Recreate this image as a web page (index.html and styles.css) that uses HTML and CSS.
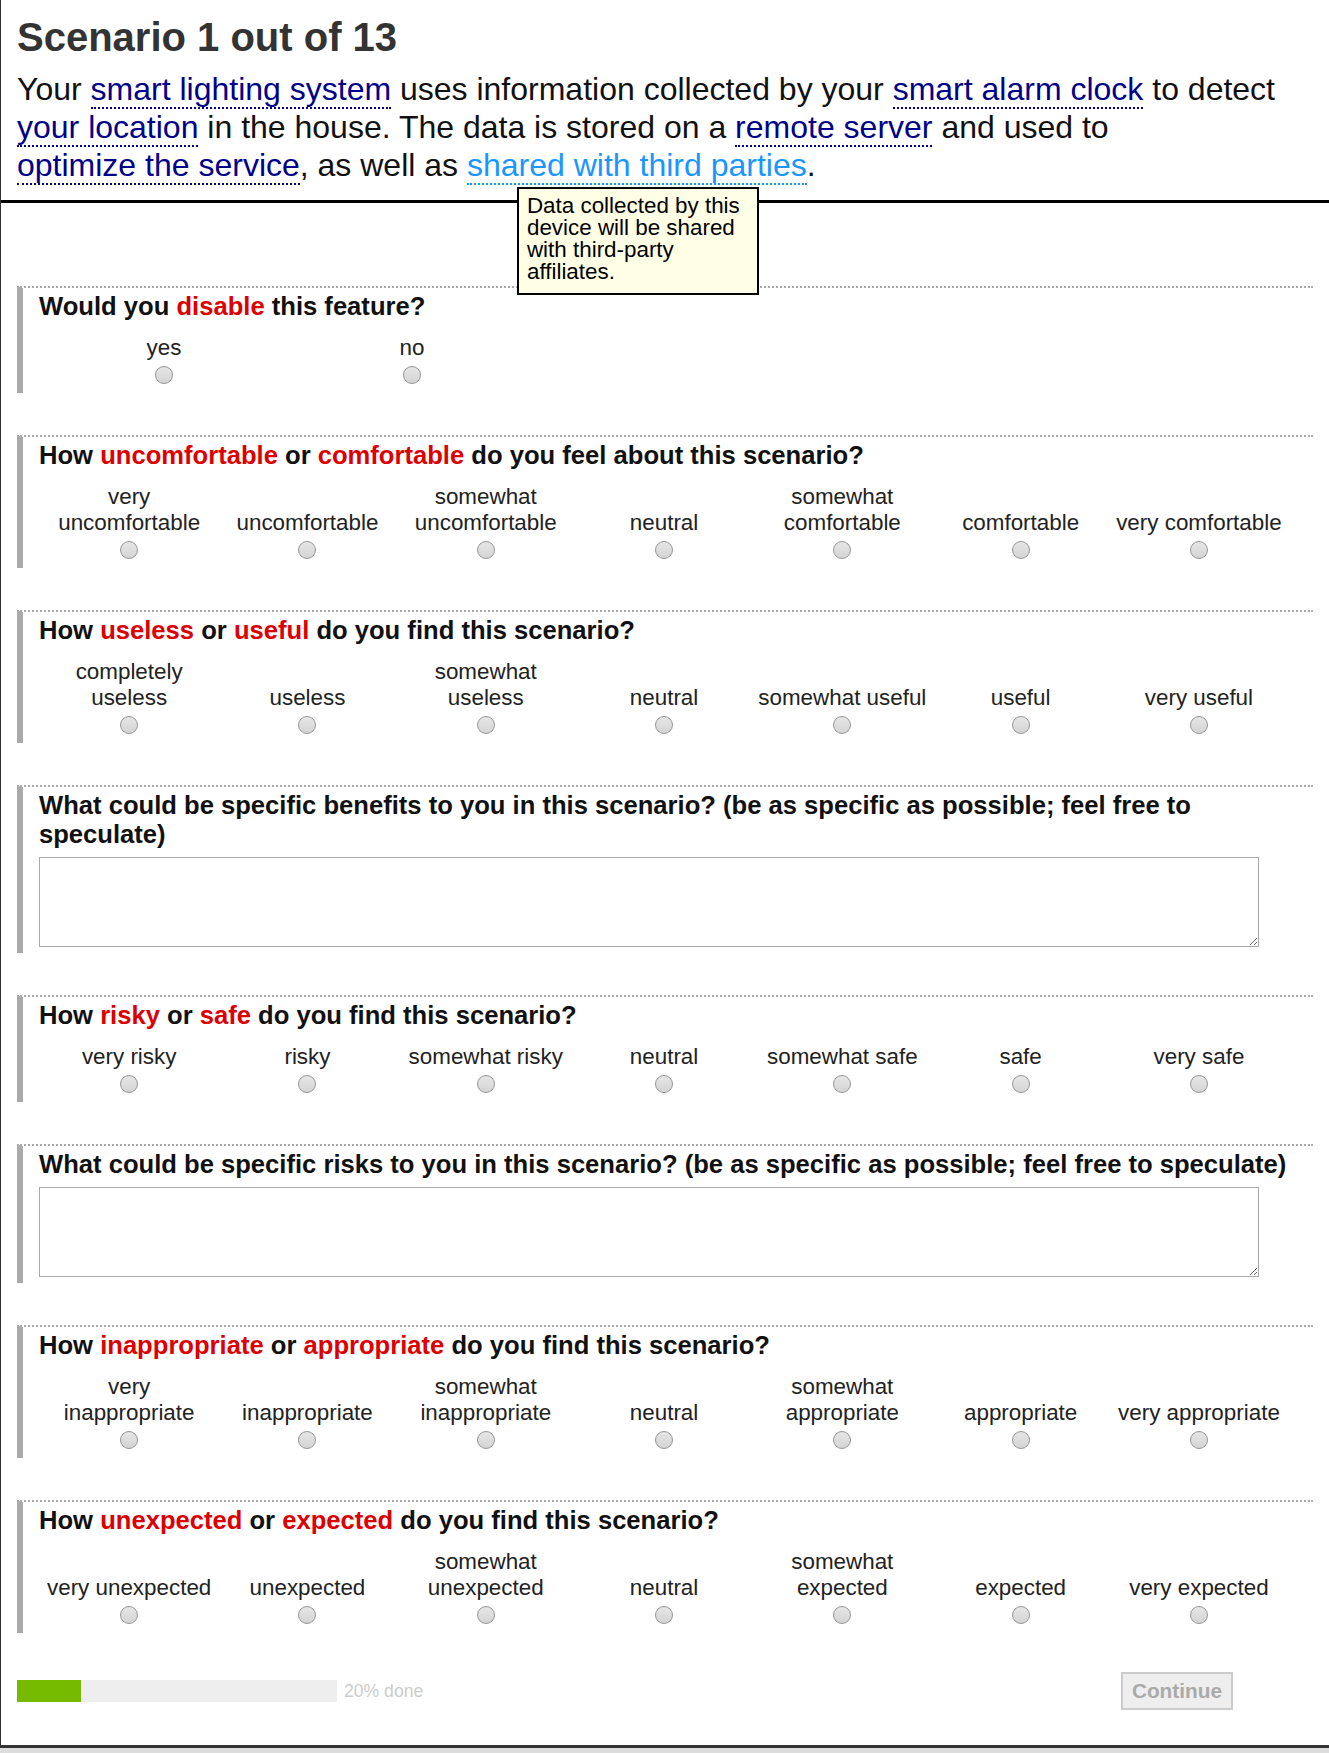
FILE: index.html
```html
<!DOCTYPE html>
<html lang="en">
<head>
<meta charset="utf-8">
<title>Scenario 1 out of 13</title>
<link rel="stylesheet" href="styles.css">
</head>
<body>
<div class="page">
  <header class="scenario">
    <h1 class="scenario-title">Scenario 1 out of 13</h1>
    <p class="scenario-text">Your <span class="term">smart lighting system</span> uses information collected by your <span class="term">smart alarm clock</span> to detect <span class="term">your location</span> in the house. The data is stored on a <span class="term">remote server</span> and used to <span class="term">optimize the service</span>, as well as <span class="term term-active">shared with third parties<span class="tooltip">Data collected by this device will be shared with third-party affiliates.</span></span>.</p>
  </header>

  <main class="survey">
    <section class="question">
      <h2 class="q-title">Would you <span class="hl">disable</span> this feature?</h2>
      <div class="options options-2">
        <label class="option"><span>yes</span><input type="radio" name="q1"></label>
        <label class="option"><span>no</span><input type="radio" name="q1"></label>
      </div>
    </section>

    <section class="question">
      <h2 class="q-title">How <span class="hl">uncomfortable</span> or <span class="hl">comfortable</span> do you feel about this scenario?</h2>
      <div class="options">
        <label class="option"><span>very uncomfortable</span><input type="radio" name="q2"></label>
        <label class="option"><span>uncomfortable</span><input type="radio" name="q2"></label>
        <label class="option"><span>somewhat uncomfortable</span><input type="radio" name="q2"></label>
        <label class="option"><span>neutral</span><input type="radio" name="q2"></label>
        <label class="option"><span>somewhat comfortable</span><input type="radio" name="q2"></label>
        <label class="option"><span>comfortable</span><input type="radio" name="q2"></label>
        <label class="option"><span>very comfortable</span><input type="radio" name="q2"></label>
      </div>
    </section>

    <section class="question">
      <h2 class="q-title">How <span class="hl">useless</span> or <span class="hl">useful</span> do you find this scenario?</h2>
      <div class="options">
        <label class="option"><span>completely useless</span><input type="radio" name="q3"></label>
        <label class="option"><span>useless</span><input type="radio" name="q3"></label>
        <label class="option"><span>somewhat useless</span><input type="radio" name="q3"></label>
        <label class="option"><span>neutral</span><input type="radio" name="q3"></label>
        <label class="option"><span>somewhat useful</span><input type="radio" name="q3"></label>
        <label class="option"><span>useful</span><input type="radio" name="q3"></label>
        <label class="option"><span>very useful</span><input type="radio" name="q3"></label>
      </div>
    </section>

    <section class="question question-text">
      <h2 class="q-title">What could be specific benefits to you in this scenario? (be as specific as possible; feel free to speculate)</h2>
      <textarea class="answer" aria-label="benefits"></textarea>
    </section>

    <section class="question">
      <h2 class="q-title">How <span class="hl">risky</span> or <span class="hl">safe</span> do you find this scenario?</h2>
      <div class="options">
        <label class="option"><span>very risky</span><input type="radio" name="q5"></label>
        <label class="option"><span>risky</span><input type="radio" name="q5"></label>
        <label class="option"><span>somewhat risky</span><input type="radio" name="q5"></label>
        <label class="option"><span>neutral</span><input type="radio" name="q5"></label>
        <label class="option"><span>somewhat safe</span><input type="radio" name="q5"></label>
        <label class="option"><span>safe</span><input type="radio" name="q5"></label>
        <label class="option"><span>very safe</span><input type="radio" name="q5"></label>
      </div>
    </section>

    <section class="question question-text">
      <h2 class="q-title">What could be specific risks to you in this scenario? (be as specific as possible; feel free to speculate)</h2>
      <textarea class="answer" aria-label="risks"></textarea>
    </section>

    <section class="question">
      <h2 class="q-title">How <span class="hl">inappropriate</span> or <span class="hl">appropriate</span> do you find this scenario?</h2>
      <div class="options">
        <label class="option"><span>very inappropriate</span><input type="radio" name="q7"></label>
        <label class="option"><span>inappropriate</span><input type="radio" name="q7"></label>
        <label class="option"><span>somewhat inappropriate</span><input type="radio" name="q7"></label>
        <label class="option"><span>neutral</span><input type="radio" name="q7"></label>
        <label class="option"><span>somewhat appropriate</span><input type="radio" name="q7"></label>
        <label class="option"><span>appropriate</span><input type="radio" name="q7"></label>
        <label class="option"><span>very appropriate</span><input type="radio" name="q7"></label>
      </div>
    </section>

    <section class="question">
      <h2 class="q-title">How <span class="hl">unexpected</span> or <span class="hl">expected</span> do you find this scenario?</h2>
      <div class="options">
        <label class="option"><span>very unexpected</span><input type="radio" name="q8"></label>
        <label class="option"><span>unexpected</span><input type="radio" name="q8"></label>
        <label class="option"><span>somewhat unexpected</span><input type="radio" name="q8"></label>
        <label class="option"><span>neutral</span><input type="radio" name="q8"></label>
        <label class="option"><span>somewhat expected</span><input type="radio" name="q8"></label>
        <label class="option"><span>expected</span><input type="radio" name="q8"></label>
        <label class="option"><span>very expected</span><input type="radio" name="q8"></label>
      </div>
    </section>
  </main>

  <footer class="survey-footer">
    <div class="progress">
      <div class="progress-track"><div class="progress-fill" style="width: 20%"></div></div>
      <span class="progress-label">20% done</span>
    </div>
    <button class="continue" type="button" disabled>Continue</button>
  </footer>
</div>
</body>
</html>
```

FILE: styles.css
```css
html {
  background: #dddddd;
}

body {
  margin: 0;
  font-family: "Liberation Sans", Arial, sans-serif;
  color: #111;
}

.page {
  background: #fff;
  border-left: 1px solid #333;
  border-bottom: 3px solid #333;
}

/* Header */
.scenario {
  padding: 15px 16px 16px 16px;
  border-bottom: 3px solid #000;
}

.scenario-title {
  margin: 0;
  font-size: 40px;
  font-weight: bold;
  line-height: normal;
  color: #333;
}

.scenario-text {
  margin: 10px 0 0;
  font-size: 32px;
  line-height: 38px;
  color: #111;
}

.term {
  color: #00008b;
  border-bottom: 2px dotted #00008b;
  white-space: nowrap;
}

.term-active {
  position: relative;
  color: #1a96ff;
  border-bottom-color: #1a96ff;
}

.tooltip {
  position: absolute;
  z-index: 2;
  left: 50px;
  top: calc(100% + 4px);
  width: 222px;
  padding: 6px 8px 10px 8px;
  border: 2px solid #000;
  background: #ffffe6;
  color: #000;
  font-size: 22.4px;
  line-height: 22px;
  white-space: normal;
}

/* Survey */
.survey {
  display: flex;
  flex-direction: column;
  gap: 42px;
  padding: 83px 16px 0 16px;
}

.question {
  border-top: 2px dotted #aaa;
  border-left: 6px solid #aaa;
  padding: 4px 0 9px 16px;
}

.question-text {
  padding-bottom: 6px;
}

.q-title {
  margin: 0;
  font-size: 25.6px;
  font-weight: bold;
  line-height: normal;
  color: #111;
}

.hl {
  color: #dd0000;
}

.options {
  display: grid;
  grid-template-columns: repeat(7, 178.3px);
  align-items: end;
  margin-top: 14px;
  padding-left: 1px;
}

.options-2 {
  grid-template-columns: repeat(2, 248px);
}

.option {
  display: flex;
  flex-direction: column;
  align-items: center;
  padding: 0 3px;
  text-align: center;
  font-size: 22.4px;
  line-height: normal;
  color: #222;
}

.option input {
  appearance: none;
  -webkit-appearance: none;
  display: block;
  width: 18px;
  height: 18px;
  margin: 5px 0 0;
  border: 1px solid #969696;
  border-radius: 50%;
  background: linear-gradient(#e6e6e6, #d4d4d4);
}

.answer {
  display: block;
  box-sizing: border-box;
  width: 1220px;
  height: 90px;
  margin-top: 8px;
  border: 1px solid #aaa;
  background: #fff;
  font-family: "Liberation Sans", Arial, sans-serif;
}

/* Footer */
.survey-footer {
  display: flex;
  align-items: center;
  justify-content: space-between;
  padding: 39px 96px 35px 16px;
}

.progress {
  display: flex;
  align-items: center;
  gap: 7px;
}

.progress-track {
  width: 320px;
  height: 22px;
  background: #eeeeee;
}

.progress-fill {
  height: 100%;
  background: #77bb00;
}

.progress-label {
  font-size: 17.6px;
  color: #cccccc;
}

.continue {
  padding: 5px 9px;
  border: 2px solid #cccccc;
  background: #eeeeee;
  color: #aaaaaa;
  font-family: "Liberation Sans", Arial, sans-serif;
  font-size: 20.8px;
  font-weight: bold;
  line-height: normal;
}
```
